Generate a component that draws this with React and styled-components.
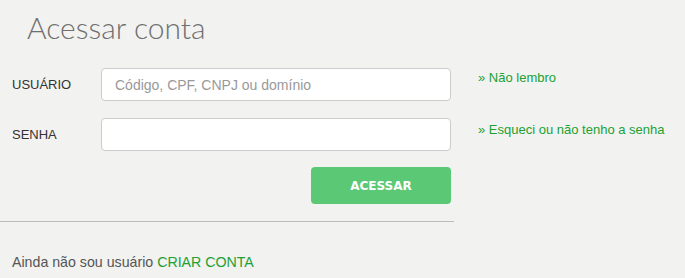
import styled, { createGlobalStyle } from 'styled-components'

const GlobalStyle = createGlobalStyle`
  html, body {
    margin: 0;
    padding: 0;
    background: #f2f2f0;
  }
  body {
    font-family: "Liberation Sans", Arial, sans-serif;
  }
`

const Page = styled.div`
  width: 685px;
  height: 278px;
  background: #f2f2f0;
  overflow: hidden;
`
const Title = styled.h1`
  margin: 0;
  padding: 8px 0 0 27px;
  font-family: "Lato", sans-serif;
  font-weight: 300;
  font-size: 30px;
  line-height: 38px;
  color: #6f6f6f;
`
const Body = styled.div`
  display: flex;
  margin-top: 22px;
`
const Main = styled.div`
  width: 454px;
`
const Form = styled.form`
  display: flex;
  flex-direction: column;
  gap: 17px;
  padding-left: 12px;
  padding-right: 3px;
`
const Row = styled.div`
  display: flex;
  align-items: center;
`
const Label = styled.label`
  width: 89px;
  font-family: "Liberation Sans", Arial, sans-serif;
  font-size: 13px;
  color: #333;
`
const Input = styled.input`
  box-sizing: border-box;
  width: 350px;
  height: 33px;
  border: 1px solid #cccccc;
  border-radius: 4px;
  background: #fff;
  padding: 0 13px;
  font-family: "Liberation Sans", Arial, sans-serif;
  font-size: 14px;
  color: #333;
  outline: none;
  &::placeholder {
    color: #999;
  }
`
const Actions = styled.div`
  display: flex;
  justify-content: flex-end;
  margin-top: -1px;
`
const Button = styled.button`
  width: 140px;
  height: 37px;
  border: none;
  border-radius: 4px;
  background: #5bc875;
  color: #fff;
  font-family: "DejaVu Sans", sans-serif;
  font-weight: bold;
  font-size: 12px;
  cursor: pointer;
`
const Divider = styled.hr`
  margin: 17px 0 0;
  border: none;
  border-top: 1px solid #bdbdbd;
`
const Footer = styled.p`
  margin: 32px 0 0 12px;
  font-family: "Liberation Sans", Arial, sans-serif;
  font-size: 14.2px;
  color: #555;
`
const Side = styled.div`
  display: flex;
  flex-direction: column;
  gap: 37px;
  padding: 2px 0 0 24px;
`
const Link = styled.a`
  font-family: "Liberation Sans", Arial, sans-serif;
  font-size: ${(p) => p.$size || 13}px;
  color: #21a133;
  text-decoration: none;
`

export default function App() {
  return (
    <Page>
      <GlobalStyle />
      <Title>Acessar conta</Title>
      <Body>
        <Main>
          <Form>
            <Row>
              <Label>USUÁRIO</Label>
              <Input placeholder="Código, CPF, CNPJ ou domínio" />
            </Row>
            <Row>
              <Label>SENHA</Label>
              <Input type="password" />
            </Row>
            <Actions>
              <Button type="button">ACESSAR</Button>
            </Actions>
          </Form>
          <Divider />
          <Footer>
            Ainda não sou usuário <Link href="#" $size={14.2}>CRIAR CONTA</Link>
          </Footer>
        </Main>
        <Side>
          <Link href="#">» Não lembro</Link>
          <Link href="#">» Esqueci ou não tenho a senha</Link>
        </Side>
      </Body>
    </Page>
  )
}
